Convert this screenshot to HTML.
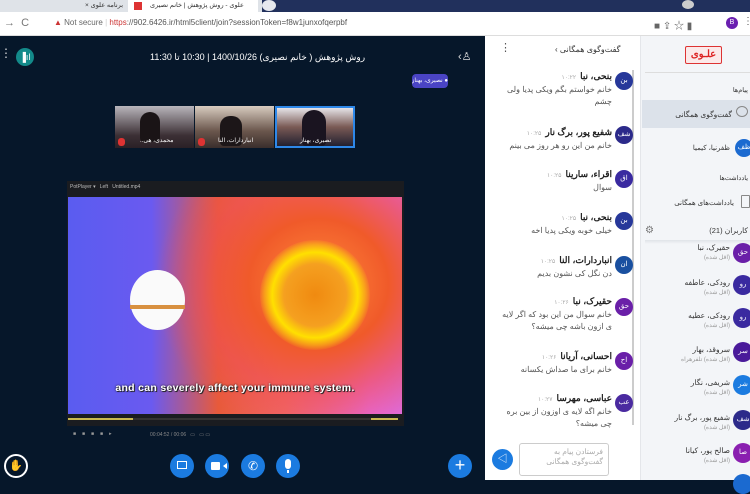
<!DOCTYPE html>
<html><head><meta charset="utf-8"><style>
*{margin:0;padding:0;box-sizing:border-box}
body{width:750px;height:480px;overflow:hidden;position:relative;font-family:"Liberation Sans","Noto Sans CJK SC",sans-serif;background:#06172a}
.a{position:absolute;white-space:nowrap}
.fa{direction:rtl}
.av{position:absolute;width:18px;height:18px;border-radius:50%;color:#fff;font-size:7px;text-align:center;line-height:18px}
.msg{position:absolute;right:138px;width:115px;text-align:right;direction:rtl;font-size:8px;color:#555;line-height:12px}
.msg b{color:#222;font-size:9px}
.msg i{font-style:normal;color:#aaa;font-size:6px;margin-right:4px}
.u{position:absolute;right:20px;text-align:right;direction:rtl;font-size:7.5px;color:#333;line-height:10px;white-space:nowrap}
.u span{color:#999;font-size:6px;display:block}
.btn{position:absolute;width:24px;height:24px;border-radius:50%;background:#1b7be0;top:454px}
</style></head><body>
<div class="a" style="left:0;top:0;width:262px;height:12px;background:#dfe3e8"></div>
<div class="a" style="left:262px;top:0;width:488px;height:12px;background:#21305c"></div>
<div class="a" style="left:128px;top:0;width:130px;height:12px;background:#fff"></div>
<div class="a fa" style="left:85px;top:1px;font-size:6.5px;color:#333">برنامه علوی ×</div>
<div class="a" style="left:134px;top:2px;width:8px;height:8px;background:#d33"></div>
<div class="a fa" style="left:150px;top:1px;font-size:6.5px;color:#333">علوی - روش پژوهش | خانم نصیری</div>
<div class="a" style="left:262px;top:0;width:14px;height:11px;border-radius:50%;background:#e6e8ee"></div>
<div class="a" style="left:682px;top:0;width:12px;height:9px;border-radius:50%;background:#ccc"></div>
<div class="a" style="left:0;top:12px;width:750px;height:24px;background:#fff;border-bottom:1px solid #ddd"></div>
<div class="a" style="left:4px;top:17px;font-size:11px;color:#777">→&nbsp;&nbsp;C</div>
<div class="a" style="left:54px;top:18px;font-size:8px;color:#c33">▲ <span style="color:#666">Not secure</span> <span style="color:#ccc">|</span> <span style="color:#c33">https</span><span style="color:#555">://902.6426.ir/html5client/join?sessionToken=f8w1junxofqerpbf</span></div>
<div class="a" style="left:654px;top:17px;font-size:10px;color:#666">■ ⇪ ☆ ▮</div>
<div class="a" style="left:726px;top:17px;width:12px;height:12px;border-radius:50%;background:#6a1fb0;color:#fff;font-size:7px;text-align:center;line-height:12px">B</div>
<div class="a" style="left:743px;top:16px;font-size:10px;color:#555">⋮</div>
<div class="a" style="left:0;top:46px;font-size:12px;color:#ddd">⋮</div>
<div class="a" style="left:16px;top:48px;width:18px;height:18px;border-radius:50%;background:#138a8a;color:#fff;font-size:9px;text-align:center;line-height:18px">▐ıl</div>
<div class="a fa" style="left:150px;top:52px;font-size:9px;color:#fff">روش پژوهش ( خانم نصیری) 1400/10/26 | 10:30 تا 11:30</div>
<div class="a" style="left:458px;top:50px;font-size:11px;color:#ddd">‹♙</div>
<div class="a" style="left:412px;top:74px;width:36px;height:14px;border-radius:4px;background:#4a44c4;color:#fff;font-size:6px;line-height:14px;text-align:center;overflow:hidden;direction:rtl">● نصیری، بهناز</div>
<div class="a" style="left:115px;top:106px;width:79px;height:42px;background:linear-gradient(#b9b6bc,#3c3035 70%,#2a2026)"></div>
<div class="a" style="left:195px;top:106px;width:79px;height:42px;background:linear-gradient(#d8ccc0,#6a564c 60%,#3a2e2c)"></div>
<div class="a" style="left:275px;top:106px;width:80px;height:42px;background:linear-gradient(#e6e4e8,#7a5a55 50%,#222030);border:2px solid #2e88e8"></div>
<div class="a" style="left:140px;top:112px;width:20px;height:30px;border-radius:10px 10px 4px 4px;background:#1a1416"></div>
<div class="a" style="left:220px;top:116px;width:22px;height:30px;border-radius:10px 10px 4px 4px;background:#1c1618"></div>
<div class="a" style="left:302px;top:110px;width:24px;height:36px;border-radius:12px 12px 4px 4px;background:#1a1420"></div>
<div class="a" style="left:118px;top:138px;width:7px;height:8px;border-radius:3px;background:#d33"></div>
<div class="a" style="left:198px;top:138px;width:7px;height:8px;border-radius:3px;background:#d33"></div>
<div class="a fa" style="left:140px;top:137px;font-size:6px;color:#fff">محمدی، هی..</div>
<div class="a fa" style="left:218px;top:137px;font-size:6px;color:#fff">انباردارات، النا</div>
<div class="a fa" style="left:300px;top:137px;font-size:6px;color:#fff">نصیری، بهناز</div>
<div class="a" style="left:67px;top:181px;width:337px;height:245px;background:#1a1c20"></div>
<div class="a" style="left:70px;top:184px;font-size:5px;color:#bbb">PotPlayer ▾ &nbsp; Left &nbsp; Untitled.mp4</div>
<div class="a" style="left:68px;top:197px;width:334px;height:217px;background:radial-gradient(ellipse 70% 100% at 75% 40%,#ff8a3a 0%,#f05a2a 30%,rgba(240,80,80,0.6) 50%,transparent 70%),linear-gradient(90deg,#5a5cf0 0%,#6a5af0 25%,#e85a3a 45%,#f06868 65%,#e668d8 90%,#de6ad8 100%)"></div>
<div class="a" style="left:260px;top:240px;width:110px;height:110px;border-radius:50%;background:radial-gradient(circle,#f08a10 0%,#f5a020 40%,#ffe000 55%,rgba(255,240,0,0.4) 65%,transparent 72%)"></div>
<div class="a" style="left:130px;top:270px;width:55px;height:60px;border-radius:50%;background:#fafafa"></div>
<div class="a" style="left:130px;top:305px;width:55px;height:4px;background:#d89040"></div>
<div class="a" style="left:68px;top:382px;width:334px;text-align:center;font-size:10.5px;font-weight:bold;color:#fff;letter-spacing:0.3px;text-shadow:0 0 2px #000,1px 1px 0 #333">and can severely affect your immune system.</div>
<div class="a" style="left:68px;top:418px;width:65px;height:2px;background:#c8b850"></div>
<div class="a" style="left:133px;top:418px;width:250px;height:2px;background:#333"></div>
<div class="a" style="left:371px;top:418px;width:27px;height:2px;background:#c8b850"></div>
<div class="a" style="left:73px;top:431px;font-size:5px;color:#999;letter-spacing:6px">■■■■▸</div>
<div class="a" style="left:150px;top:432px;font-size:5px;color:#888">00:04:52 / 00:06 &nbsp; ▭ &nbsp; ▭ ▭</div>
<div class="a" style="left:4px;top:454px;width:24px;height:24px;border-radius:50%;border:2px solid #fff;color:#fff;font-size:11px;text-align:center;line-height:20px">✋</div>
<div class="btn" style="left:170px"><div class="a" style="left:7px;top:7px;width:10px;height:8px;border:1.5px solid #fff"></div></div>
<div class="btn" style="left:205px"><div class="a" style="left:6px;top:8px;width:9px;height:8px;background:#fff;border-radius:1px"></div><div class="a" style="left:15px;top:9px;border:3px solid transparent;border-right:4px solid #fff"></div></div>
<div class="btn" style="left:241px;color:#fff;font-size:12px;text-align:center;line-height:24px">✆</div>
<div class="btn" style="left:276px"><div class="a" style="left:9px;top:5px;width:6px;height:10px;border-radius:3px;background:#fff"></div><div class="a" style="left:11px;top:16px;width:2px;height:3px;background:#fff"></div></div>
<div class="btn" style="left:448px;color:#fff;font-size:18px;text-align:center;line-height:23px">+</div>
<div class="a" style="left:485px;top:36px;width:156px;height:444px;background:#fff"></div>
<div class="a" style="left:640px;top:36px;width:110px;height:444px;background:#f3f5f8;border-left:1px solid #e4e6ea"></div>
<div class="a" style="left:500px;top:41px;font-size:11px;color:#555">⋮</div>
<div class="a fa" style="left:555px;top:45px;font-size:8px;color:#333">گفت‌وگوی همگانی ›</div>
<div class="a" style="left:632px;top:70px;width:2px;height:355px;background:#ccc"></div>
<div class="av" style="left:615px;top:72px;background:#27389a">بن</div>
<div class="msg" style="top:70px"><b>بنحی، نبا</b><i>۱۰:۲۲</i><br>خانم خواستم بگم ویکی پدیا ولی<br>چشم</div>
<div class="av" style="left:615px;top:126px;background:#2c2a8a">شف</div>
<div class="msg" style="top:126px"><b>شفیع پور، برگ نار</b><i>۱۰:۲۵</i><br>خانم من این رو هر روز می بینم</div>
<div class="av" style="left:615px;top:170px;background:#3a2aa0">اق</div>
<div class="msg" style="top:168px"><b>اقراء، سارینا</b><i>۱۰:۲۵</i><br>سوال</div>
<div class="av" style="left:615px;top:212px;background:#27389a">بن</div>
<div class="msg" style="top:211px"><b>بنحی، نبا</b><i>۱۰:۲۵</i><br>خیلی خوبه ویکی پدیا اخه</div>
<div class="av" style="left:615px;top:256px;background:#1a50a0">ان</div>
<div class="msg" style="top:254px"><b>انباردارات، النا</b><i>۱۰:۲۵</i><br>دن نگل کی نشون بدیم</div>
<div class="av" style="left:615px;top:298px;background:#6a1fa8">حق</div>
<div class="msg" style="top:295px"><b>حقیرک، نبا</b><i>۱۰:۲۶</i><br>خانم سوال من این بود که اگر لایه<br>ی ازون باشه چی میشه؟</div>
<div class="av" style="left:615px;top:352px;background:#6a1fa8">اح</div>
<div class="msg" style="top:350px"><b>احسانی، آریانا</b><i>۱۰:۲۶</i><br>خانم برای ما صداش یکسانه</div>
<div class="av" style="left:615px;top:394px;background:#4a2aa0">عب</div>
<div class="msg" style="top:392px"><b>عباسی، مهرسا</b><i>۱۰:۲۷</i><br>خانم اگه لایه ی اوزون از بین بره<br>چی میشه؟</div>
<div class="a fa" style="left:519px;top:443px;width:90px;height:33px;border:1px solid #ccc;border-radius:3px;font-size:7.5px;color:#aaa;padding:3px 5px;line-height:10px;white-space:normal">فرستادن پیام به گفت‌وگوی همگانی</div>
<div class="a" style="left:492px;top:449px;width:21px;height:21px;border-radius:50%;background:#1b7be0;color:#fff;font-size:10px;text-align:center;line-height:21px">◁</div>
<div class="a" style="left:685px;top:46px;width:37px;height:18px;border:1.5px solid #d33;border-radius:2px;background:#fbe9e9;color:#d22;font-weight:bold;font-size:10px;text-align:center;line-height:15px">علـوی</div>
<div class="a" style="left:645px;top:72px;width:105px;height:1px;background:#ddd"></div>
<div class="a fa" style="right:2px;top:86px;font-size:6.5px;color:#333">پیام‌ها</div>
<div class="a" style="left:642px;top:100px;width:108px;height:28px;background:#dce2ea"></div>
<div class="a fa" style="right:18px;top:110px;font-size:7.5px;color:#333">گفت‌وگوی همگانی</div>
<div class="a" style="left:736px;top:106px;width:12px;height:11px;border:1.5px solid #888;border-radius:50%"></div>
<div class="av" style="left:735px;top:139px;background:#1b6ad0">ظف</div>
<div class="a fa" style="right:20px;top:144px;font-size:7px;color:#333">ظفرنیا، کیمیا</div>
<div class="a fa" style="right:2px;top:174px;font-size:6.5px;color:#333">یادداشت‌ها</div>
<div class="a" style="left:741px;top:195px;width:9px;height:13px;border:1.5px solid #888;border-radius:1px"></div>
<div class="a fa" style="right:16px;top:199px;font-size:7px;color:#333">یادداشت‌های همگانی</div>
<div class="a fa" style="right:2px;top:226px;font-size:7.5px;color:#333">کاربران (21)</div>
<div class="a" style="left:645px;top:225px;font-size:10px;color:#777">⚙</div>
<div class="a" style="left:645px;top:240px;width:105px;height:4px;background:linear-gradient(#e0e3e8,transparent)"></div>
<div class="av" style="left:733px;top:243px;width:20px;height:20px;background:#6a1fa8;line-height:20px">حق</div>
<div class="u" style="top:243px">حقیرک، نبا<span>(اقل شده)</span></div>
<div class="av" style="left:733px;top:275px;width:20px;height:20px;background:#3a2aa0;line-height:20px">رو</div>
<div class="u" style="top:278px">رودکی، عاطفه<span>(اقل شده)</span></div>
<div class="av" style="left:733px;top:308px;width:20px;height:20px;background:#3a2aa0;line-height:20px">رو</div>
<div class="u" style="top:311px">رودکی، عطیه<span>(اقل شده)</span></div>
<div class="av" style="left:733px;top:342px;width:20px;height:20px;background:#4a1a9a;line-height:20px">سر</div>
<div class="u" style="top:345px">سروقد، بهار<span>(اقل شده) تلفرهراه</span></div>
<div class="av" style="left:733px;top:375px;width:20px;height:20px;background:#1b7be0;line-height:20px">شر</div>
<div class="u" style="top:378px">شریفی، نگار<span>(اقل شده)</span></div>
<div class="av" style="left:733px;top:410px;width:20px;height:20px;background:#2c2a8a;line-height:20px">شف</div>
<div class="u" style="top:413px">شفیع پور، برگ نار<span>(اقل شده)</span></div>
<div class="av" style="left:733px;top:443px;width:20px;height:20px;background:#8a1fb0;line-height:20px">صا</div>
<div class="u" style="top:446px">صالح پور، کیانا<span>(اقل شده)</span></div>
<div class="av" style="left:733px;top:474px;width:20px;height:20px;background:#1b6ad0"></div>
</body></html>
